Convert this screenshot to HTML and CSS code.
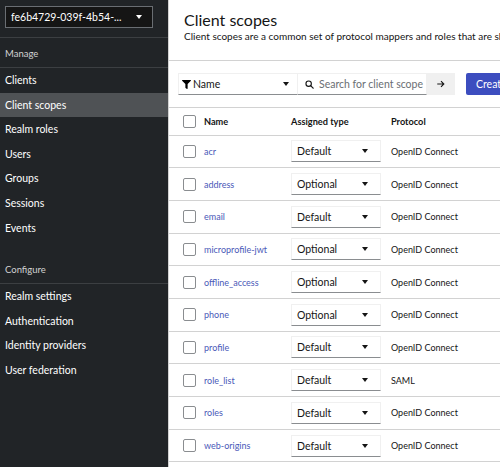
FILE: index.html
```html
<!DOCTYPE html>
<html lang="en">
<head>
    <meta charset="UTF-8">
    <meta name="viewport" content="width=device-width, initial-scale=1.0">
    <title>Client scopes</title>
    <link rel="stylesheet" href="styles.css">
</head>
<body>
<div class="page">
    <nav class="sidebar">
        <div class="realm-box">
            <div class="realm-select">
                <span>fe6b4729-039f-4b54-...</span>
                <span class="caret caret-light"></span>
            </div>
        </div>

        <div class="nav-section">
            <h3 class="nav-title">Manage</h3>
            <ul class="nav-list">
                <li>Clients</li>
                <li class="active">Client scopes</li>
                <li>Realm roles</li>
                <li>Users</li>
                <li>Groups</li>
                <li>Sessions</li>
                <li>Events</li>
            </ul>
        </div>

        <div class="nav-section configure">
            <h3 class="nav-title">Configure</h3>
            <ul class="nav-list">
                <li>Realm settings</li>
                <li>Authentication</li>
                <li>Identity providers</li>
                <li>User federation</li>
            </ul>
        </div>
    </nav>

    <main class="main">
        <div class="page-header">
            <h1>Client scopes</h1>
            <p>Client scopes are a common set of protocol mappers and roles that are shared between multiple clients.</p>
        </div>

        <div class="toolbar">
            <div class="filter-select">
                <svg class="filter-icon" viewBox="0 0 512 512"><path d="M487.976 0H24.028C2.71 0-8.047 25.866 7.058 40.971L192 225.941V432c0 7.831 3.821 15.17 10.237 19.662l80 55.98C298.02 518.69 320 507.493 320 487.98V225.941l184.947-184.97C520.021 25.896 509.338 0 487.976 0z"/></svg>
                <span class="filter-label">Name</span>
                <span class="caret"></span>
            </div>
            <div class="search-input">
                <svg class="search-icon" viewBox="0 0 16 16"><circle cx="6.5" cy="6.5" r="4.8" fill="none" stroke="currentColor" stroke-width="2"/><path d="M10 10l4.5 4.5" stroke="currentColor" stroke-width="2.2" stroke-linecap="round"/></svg>
                <span class="placeholder">Search for client scope</span>
            </div>
            <button class="arrow-button">
                <svg viewBox="0 0 16 16"><path d="M2 8h10M8 3.5L12.5 8 8 12.5" fill="none" stroke="currentColor" stroke-width="1.8"/></svg>
            </button>
            <button class="create-button">Create client scope</button>
        </div>

        <table class="scopes-table">
            <thead>
                <tr>
                    <th class="check-col"><span class="checkbox"></span></th>
                    <th class="name-col">Name</th>
                    <th class="type-col">Assigned type</th>
                    <th>Protocol</th>
                </tr>
            </thead>
            <tbody id="scope-rows"></tbody>
        </table>
    </main>
</div>

<script>
    const scopes = [
        { name: 'acr', type: 'Default', protocol: 'OpenID Connect' },
        { name: 'address', type: 'Optional', protocol: 'OpenID Connect' },
        { name: 'email', type: 'Default', protocol: 'OpenID Connect' },
        { name: 'microprofile-jwt', type: 'Optional', protocol: 'OpenID Connect' },
        { name: 'offline_access', type: 'Optional', protocol: 'OpenID Connect' },
        { name: 'phone', type: 'Optional', protocol: 'OpenID Connect' },
        { name: 'profile', type: 'Default', protocol: 'OpenID Connect' },
        { name: 'role_list', type: 'Default', protocol: 'SAML' },
        { name: 'roles', type: 'Default', protocol: 'OpenID Connect' },
        { name: 'web-origins', type: 'Default', protocol: 'OpenID Connect' }
    ];

    const tbody = document.getElementById('scope-rows');
    scopes.forEach(function (scope) {
        const row = document.createElement('tr');
        row.innerHTML =
            '<td class="check-col"><span class="checkbox"></span></td>' +
            '<td class="name-col"><a href="#">' + scope.name + '</a></td>' +
            '<td class="type-col"><div class="type-select"><span>' + scope.type + '</span><span class="caret"></span></div></td>' +
            '<td>' + scope.protocol + '</td>';
        tbody.appendChild(row);
    });
</script>
</body>
</html>
```

FILE: styles.css
```css
body {
    margin: 0;
    padding: 0;
    font-family: Lato, "Liberation Sans", sans-serif;
    color: #151515;
    background-color: #fff;
}

.page {
    display: flex;
    width: 500px;
    height: 467px;
    overflow: hidden;
}

/* sidebar */

.sidebar {
    width: 168px;
    flex-shrink: 0;
    background-color: #212427;
    color: #fff;
    border-right: 1px solid #d2d2d2;
}

.realm-box {
    padding: 6px 15px 9px 5px;
    border-bottom: 1px solid #3c3f42;
}

.realm-select {
    display: flex;
    align-items: center;
    justify-content: space-between;
    height: 20px;
    padding: 0 10px 0 5px;
    background-color: #151515;
    border: 1px solid #6a6e73;
    font-size: 10.5px;
}

.nav-title {
    margin: 0;
    padding: 10px 5px 7px;
    font-size: 9.5px;
    font-weight: normal;
    line-height: 12px;
    color: #d2d2d2;
    border-bottom: 1px solid #3c3f42;
}

.configure {
    margin-top: 14px;
}

.nav-list {
    list-style: none;
    margin: 0;
    padding: 0;
}

.nav-list li {
    padding: 4px 5px;
    font-size: 10.5px;
    line-height: 16.6px;
}

.nav-list li.active {
    background-color: #4f5255;
}

/* carets */

.caret {
    flex-shrink: 0;
    width: 0;
    height: 0;
    border-left: 3.5px solid transparent;
    border-right: 3.5px solid transparent;
    border-top: 4px solid #151515;
}

.caret-light {
    border-top-color: #fff;
}

/* main */

.main {
    flex: 1;
    min-width: 0;
    overflow: hidden;
}

.page-header {
    padding: 11px 15px 16px;
    border-bottom: 1px solid #d2d2d2;
}

.page-header h1 {
    margin: 0;
    font-size: 16px;
    font-weight: normal;
    line-height: 18px;
}

.page-header p {
    margin: 0;
    font-size: 10px;
    line-height: 15px;
    white-space: nowrap;
}

.toolbar {
    display: flex;
    align-items: stretch;
    height: 22px;
    padding: 12px 0 12px 9px;
    border-bottom: 1px solid #d2d2d2;
    white-space: nowrap;
}

.toolbar > * {
    flex-shrink: 0;
    box-sizing: border-box;
}

.filter-select {
    display: flex;
    align-items: center;
    width: 120px;
    padding: 0 8px 0 3px;
    border: 1px solid #f0f0f0;
    border-bottom-color: #8a8d90;
    font-size: 10.5px;
}

.filter-icon {
    width: 9px;
    height: 9px;
    margin-right: 2px;
}

.filter-label {
    flex: 1;
}

.search-input {
    display: flex;
    align-items: center;
    width: 129px;
    padding: 0 0 0 7px;
    border: 1px solid #f0f0f0;
    border-bottom-color: #8a8d90;
    border-left: none;
    font-size: 10.5px;
    color: #6a6e73;
    overflow: hidden;
}

.search-icon {
    width: 9px;
    height: 9px;
    margin-right: 5px;
    color: #151515;
}

.arrow-button {
    width: 28px;
    padding: 0;
    border: none;
    background-color: #f0f0f0;
    color: #151515;
}

.arrow-button svg {
    width: 10px;
    height: 10px;
}

.create-button {
    margin-left: 11px;
    padding: 0 10px;
    border: none;
    border-radius: 2px;
    background-color: #3c4dbf;
    color: #fff;
    font-family: inherit;
    font-size: 10.5px;
}

/* table */

.scopes-table {
    width: 600px;
    table-layout: fixed;
    border-collapse: collapse;
    font-size: 9px;
}

.scopes-table th,
.scopes-table td {
    padding: 0;
    text-align: left;
    vertical-align: middle;
    border-bottom: 1px solid #d2d2d2;
    white-space: nowrap;
}

.scopes-table thead tr {
    height: 27px;
}

.scopes-table th {
    font-weight: bold;
    font-size: 9.2px;
}

.scopes-table tbody tr {
    height: 32.7px;
}

.scopes-table .check-col {
    width: 21px;
    padding-left: 14px;
}

.name-col {
    width: 87px;
}

.type-col {
    width: 100px;
}

.checkbox {
    display: block;
    width: 11px;
    height: 11px;
    border: 1px solid #8a8d90;
    border-radius: 2px;
}

.scopes-table a {
    color: #4a59b8;
    text-decoration: none;
}

.type-select {
    display: flex;
    align-items: center;
    justify-content: space-between;
    box-sizing: border-box;
    width: 90px;
    height: 22px;
    padding: 0 12px 0 5px;
    border: 1px solid #f0f0f0;
    border-bottom-color: #8a8d90;
    font-size: 10.5px;
}
```
